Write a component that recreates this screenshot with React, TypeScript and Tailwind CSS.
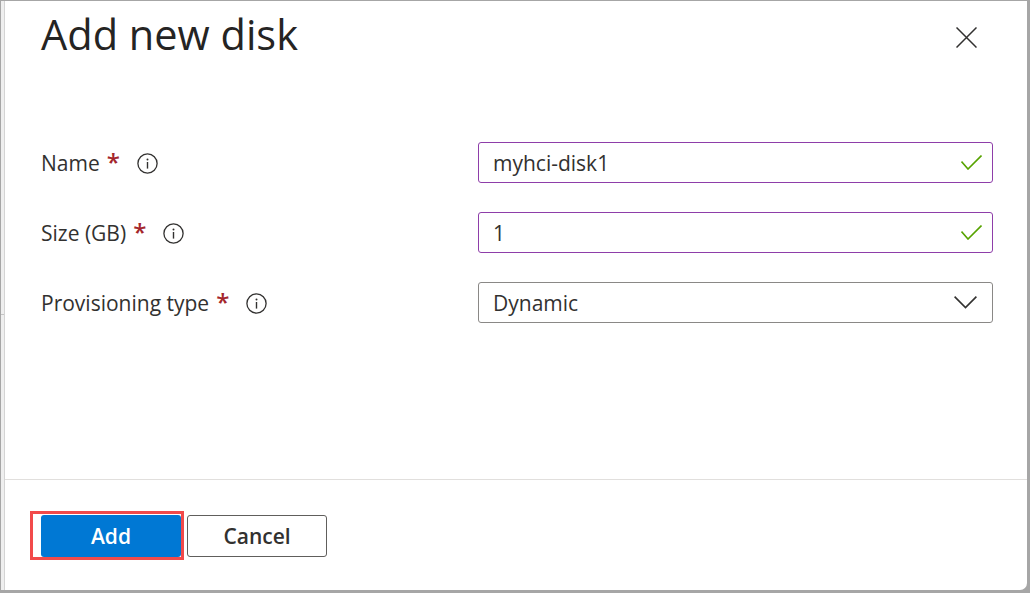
import type { ReactNode } from "react";

const FONT = "font-['Segoe_UI','Open_Sans',sans-serif]";

function InfoIcon() {
  return (
    <svg width="21" height="21" viewBox="0 0 21 21" aria-hidden className="shrink-0">
      <circle cx="10.5" cy="10.5" r="9.6" fill="none" stroke="#323130" strokeWidth="1.3" />
      <circle cx="10.5" cy="6.4" r="1" fill="#323130" />
      <path d="M10.5 9v6.6" stroke="#323130" strokeWidth="1.4" />
    </svg>
  );
}

function CheckIcon() {
  return (
    <svg width="21" height="15" viewBox="0 0 21 15" aria-hidden className="shrink-0">
      <path d="M0.5 6.5 L7 14 L20.5 0.5" fill="none" stroke="#57a300" strokeWidth="1.6" />
    </svg>
  );
}

function ChevronIcon() {
  return (
    <svg width="23" height="13" viewBox="0 0 23 13" aria-hidden className="shrink-0">
      <path d="M0.6 0.6 L11.5 11.6 L22.4 0.6" fill="none" stroke="#323130" strokeWidth="1.6" />
    </svg>
  );
}

function CloseIcon() {
  return (
    <svg width="21" height="21" viewBox="0 0 21 21" aria-hidden>
      <path d="M0.5 0.5 L20.5 20.5 M20.5 0.5 L0.5 20.5" stroke="#323130" strokeWidth="1.5" />
    </svg>
  );
}

function Label({ children }: { children: ReactNode }) {
  return (
    <div className="flex h-[41px] items-center text-[21px] text-[#323130]">
      <span className="pt-[3px]">{children}</span>
      <span className="ml-[7px] -mt-[2px] text-[24px] font-semibold text-[#a4262c]">*</span>
      <span className="ml-[17px] flex pt-[2px]">
        <InfoIcon />
      </span>
    </div>
  );
}

function Field({ value, valid, select }: { value: string; valid?: boolean; select?: boolean }) {
  return (
    <div
      className={
        "flex h-[41px] items-center justify-between rounded-[3px] border bg-white pl-[14px] text-[21px] text-[#323130] " +
        (select ? "border-[#8a8886] pr-[15px]" : "border-[#8e3ea9] pr-[10px]")
      }
    >
      <span className="pt-[3px]">{value}</span>
      {valid && <CheckIcon />}
      {select && <ChevronIcon />}
    </div>
  );
}

export default function App() {
  return (
    <div className={`${FONT} flex h-[593px] w-[1030px] bg-[#a6a6a6] pb-[3px] pl-px pr-[3px] pt-px`}>
      {/* page behind the blade */}
      <div className="flex w-[3px] flex-col bg-[#efefef]">
        <div className="mt-[313px] h-px bg-[#c4c4c4]" />
      </div>

      <div className="flex flex-1 flex-col rounded-br-[7px] border-l border-[#d4d4d4] bg-white">
        <header className="flex items-start justify-between pl-[36px] pr-[34px]">
          <h1 className="mt-[5px] text-[41.5px] leading-[56px] text-[#252423]">Add new disk</h1>
          <button
            aria-label="Close"
            className="mr-[11px] mt-[20px] flex h-8 w-8 items-center justify-center"
          >
            <CloseIcon />
          </button>
        </header>

        <main className="flex-1 pl-[36px] pr-[34px]">
          <div className="mt-[80px] grid grid-cols-[437px_1fr] gap-y-[29px]">
            <Label>Name</Label>
            <Field value="myhci-disk1" valid />
            <Label>Size (GB)</Label>
            <Field value="1" valid />
            <Label>Provisioning type</Label>
            <Field value="Dynamic" select />
          </div>
        </main>

        <footer className="flex gap-[6px] border-t border-[#e1dfdd] pb-[33px] pl-[36px] pt-[35px]">
          <div className="relative">
            <button className="h-[42px] w-[140px] rounded-[3px] bg-[#0078d4] pt-[2px] text-[21px] font-semibold text-white">
              Add
            </button>
            <div className="pointer-events-none absolute -bottom-[3px] -left-[11px] -right-[3px] -top-[4px] border-[3px] border-[#f24a4a]" />
          </div>
          <button className="h-[42px] w-[140px] rounded-[3px] border border-[#605e5c] bg-white pt-[2px] text-[21px] font-semibold text-[#323130]">
            Cancel
          </button>
        </footer>
      </div>
    </div>
  );
}
